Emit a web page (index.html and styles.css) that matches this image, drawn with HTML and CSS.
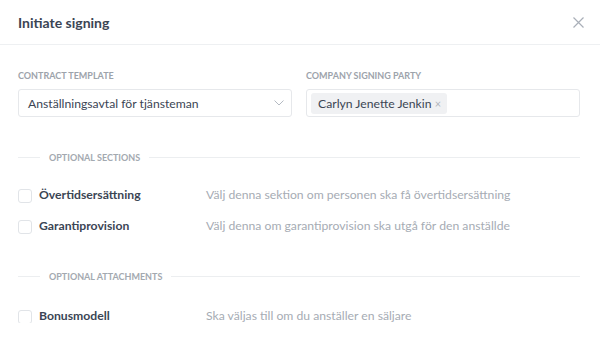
FILE: index.html
```html
<!DOCTYPE html>
<html lang="sv">
<head>
  <meta charset="UTF-8" />
  <meta name="viewport" content="width=device-width, initial-scale=1.0"/>
  <title>Initiate signing</title>
  <link rel="stylesheet" href="styles.css">
</head>
<body>
  <div class="modal">
    <header class="modal-header">
      <h1>Initiate signing</h1>
      <button class="close" type="button" aria-label="Close">
        <svg width="11" height="11" viewBox="0 0 11 11"><path d="M0.5 0.5 L10.5 10.5 M10.5 0.5 L0.5 10.5" stroke="#a9afb8" stroke-width="1.2" fill="none"/></svg>
      </button>
    </header>

    <div class="modal-body">
      <div class="fields">
        <div class="field">
          <label class="field-label">Contract template</label>
          <div class="input select">
            <span>Anställningsavtal för tjänsteman</span>
            <svg width="10" height="6" viewBox="0 0 10 6"><path d="M0.5 0.5 L5 5 L9.5 0.5" stroke="#b4bac2" stroke-width="1" fill="none"/></svg>
          </div>
        </div>
        <div class="field">
          <label class="field-label">Company signing party</label>
          <div class="input tags">
            <span class="tag">Carlyn Jenette Jenkin <span class="tag-x">×</span></span>
          </div>
        </div>
      </div>

      <div class="divider"><span>Optional sections</span></div>
      <div class="options">
        <label class="option">
          <span class="checkbox"></span>
          <span class="option-name">Övertidsersättning</span>
          <span class="option-desc">Välj denna sektion om personen ska få övertidsersättning</span>
        </label>
        <label class="option">
          <span class="checkbox"></span>
          <span class="option-name">Garantiprovision</span>
          <span class="option-desc">Välj denna om garantiprovision ska utgå för den anställde</span>
        </label>
      </div>

      <div class="divider spaced"><span>Optional attachments</span></div>
      <div class="options attachments">
        <label class="option">
          <span class="checkbox"></span>
          <span class="option-name">Bonusmodell</span>
          <span class="option-desc">Ska väljas till om du anställer en säljare</span>
        </label>
      </div>
    </div>
  </div>
</body>
</html>
```

FILE: styles.css
```css
body {
  margin: 0;
  font-family: Lato, "Noto Sans", sans-serif;
  background-color: #fff;
  color: #3b4554;
}
.modal {
  width: 600px;
}
.modal-header {
  display: flex;
  align-items: center;
  justify-content: space-between;
  height: 44px;
  padding: 0 18px;
  border-bottom: 1px solid #eef0f2;
}
.modal-header h1 {
  margin: 0;
  font-size: 14px;
  font-weight: 700;
  color: #3b4554;
}
.close {
  background: none;
  border: 0;
  padding: 0;
  margin-right: -2px;
  display: flex;
}
.modal-body {
  padding: 25px 20px 0 18px;
}
.fields {
  display: grid;
  grid-template-columns: 1fr 1fr;
  gap: 14px;
}
.field-label {
  display: block;
  font-size: 9px;
  line-height: 11px;
  font-weight: 700;
  text-transform: uppercase;
  color: #9da3ab;
  margin-bottom: 8px;
}
.input {
  display: flex;
  align-items: center;
  height: 26px;
  border: 1px solid #e6e8eb;
  border-radius: 3px;
  font-size: 12.2px;
  color: #3b4554;
}
.select {
  justify-content: space-between;
  padding: 0 7px 0 9px;
}
.tags {
  padding: 0 4px;
}
.tag {
  background-color: #f0f1f3;
  border-radius: 3px;
  padding: 3px 6px 3px 7px;
}
.tag-x {
  color: #b0b5bc;
  font-size: 11px;
}
.divider {
  display: flex;
  align-items: center;
  margin: 35px 0 24px;
  font-size: 9px;
  line-height: 11px;
  font-weight: 700;
  text-transform: uppercase;
  color: #a3a9b0;
}
.divider.spaced {
  margin-top: 38px;
}
.divider::before {
  content: "";
  width: 22px;
  border-top: 1px solid #eceef0;
}
.divider::after {
  content: "";
  flex: 1;
  border-top: 1px solid #eceef0;
}
.divider span {
  padding: 0 9px;
}
.options {
  display: flex;
  flex-direction: column;
  gap: 16px;
}
.attachments {
  padding-top: 2px;
}
.option {
  display: flex;
  align-items: center;
  font-size: 12.2px;
  line-height: 15px;
}
.checkbox {
  width: 12px;
  height: 12px;
  border: 1px solid #e1e4e8;
  border-radius: 3px;
  margin-right: 7px;
  position: relative;
  top: 1px;
}
.option-name {
  width: 167px;
  font-weight: 700;
  color: #3b4554;
}
.option-desc {
  color: #a6acb4;
}
```
